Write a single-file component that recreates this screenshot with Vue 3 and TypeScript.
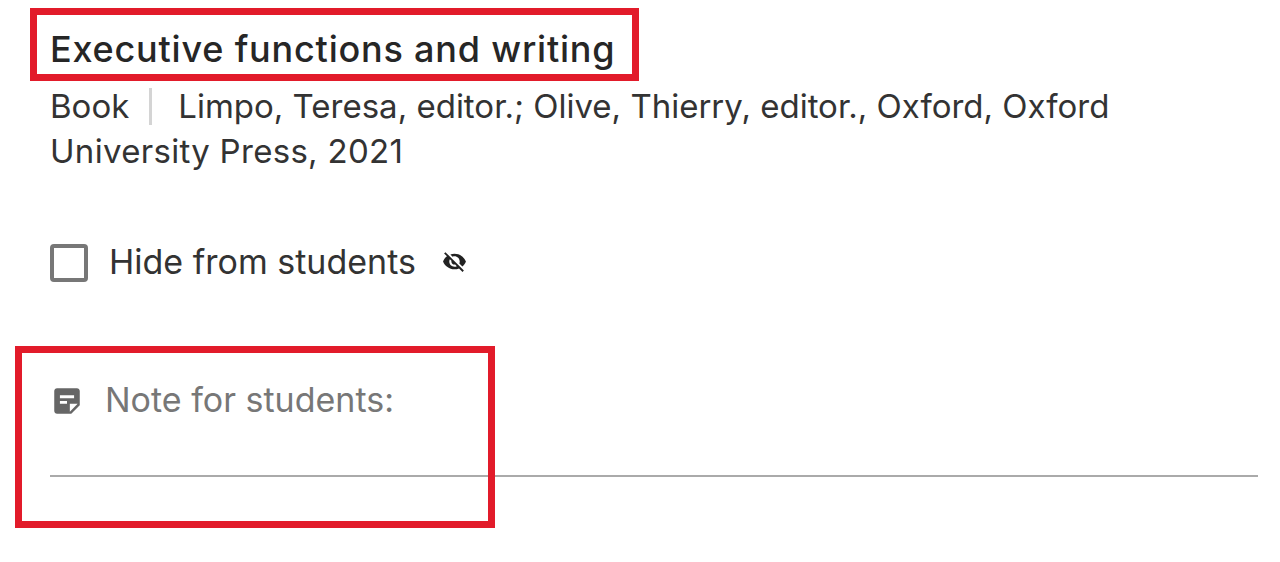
<script setup lang="ts">
const title: string = 'Executive functions and writing'
</script>

<template>
  <main class="page">
    <h1 class="title">{{ title }}</h1>
    <div class="meta">
      <p class="meta-line">
        <span>Book</span><span class="sep"></span><span>Limpo, Teresa, editor.; Olive, Thierry, editor., Oxford, Oxford</span>
      </p>
      <p class="meta-line wide">University Press, 2021</p>
    </div>
    <label class="hide">
      <span class="box"></span>
      <span class="hide-text">Hide from students</span>
      <svg class="eye" viewBox="0 0 24 24" width="25" height="25" fill="#222">
        <path d="M12 7c2.76 0 5 2.24 5 5 0 .65-.13 1.26-.36 1.83l2.92 2.92c1.51-1.26 2.7-2.89 3.43-4.75-1.73-4.39-6-7.5-11-7.5-1.4 0-2.74.25-3.98.7l2.16 2.16C10.74 7.13 11.35 7 12 7zM2 4.27l2.28 2.28.46.46C3.08 8.3 1.78 10.02 1 12c1.73 4.39 6 7.5 11 7.5 1.55 0 3.03-.3 4.38-.84l.42.42L19.73 22 21 20.73 3.27 3 2 4.27zM7.53 9.8l1.55 1.55c-.05.21-.08.43-.08.65 0 1.66 1.34 3 3 3 .22 0 .44-.03.65-.08l1.55 1.55c-.67.33-1.41.53-2.2.53-2.76 0-5-2.24-5-5 0-.79.2-1.53.53-2.2z"/>
      </svg>
    </label>
    <div class="note">
      <svg class="note-icon" viewBox="0 0 24 24" width="34" height="34" fill="#666">
        <path d="M19 3H5c-1.1 0-2 .9-2 2v14c0 1.1.9 2 2 2h10l6-6V5c0-1.1-.9-2-2-2zM7 8h10v2H7V8zm5 6H7v-2h5v2zm2 5.5V14h5.5L14 19.5z"/>
      </svg>
      <span class="note-text">Note for students:</span>
    </div>
    <div class="mark mark-title"></div>
    <div class="mark mark-note"></div>
  </main>
</template>

<style>
html, body { margin: 0; background: #fff; }
</style>

<style scoped>
.page {
  position: relative;
  box-sizing: border-box;
  width: 1280px;
  height: 562px;
  padding: 27px 22px 0 50px;
  overflow: hidden;
  background: #fff;
  font-family: Inter, "Liberation Sans", sans-serif;
  color: #333;
}
.title {
  margin: 0;
  font-size: 36px;
  line-height: 44px;
  font-weight: 500;
  letter-spacing: 0.8px;
  color: #262626;
}
.meta {
  margin-top: 13px;
  font-size: 33px;
  line-height: 45px;
}
.meta-line {
  display: flex;
  align-items: center;
  margin: 0;
  white-space: nowrap;
}
.wide { letter-spacing: 0.3px; }
.sep {
  flex: none;
  width: 3px;
  height: 37px;
  margin: 0 26px 0 20px;
  background: #d4d4d4;
}
.hide {
  display: flex;
  align-items: center;
  margin-top: 69px;
  height: 40px;
}
.box {
  box-sizing: border-box;
  width: 38px;
  height: 38px;
  border: 4px solid #777;
  border-radius: 4px;
}
.hide-text {
  margin-left: 21px;
  margin-top: -4px;
  font-size: 34px;
}
.eye { margin-left: 26px; margin-top: -4px; }
.note {
  display: flex;
  margin-top: 95px;
  height: 97px;
  border-bottom: 2px solid #aaa;
  align-items: flex-start;
}
.note-icon { margin-top: 6px; }
.note-text {
  margin-left: 21px;
  font-size: 34px;
  line-height: 44px;
  color: #777;
}
.mark {
  position: absolute;
  box-sizing: border-box;
  border: 7px solid #e21b2a;
}
.mark-title { left: 30px; top: 8px; width: 609px; height: 73px; }
.mark-note { left: 15px; top: 346px; width: 480px; height: 182px; }
</style>
